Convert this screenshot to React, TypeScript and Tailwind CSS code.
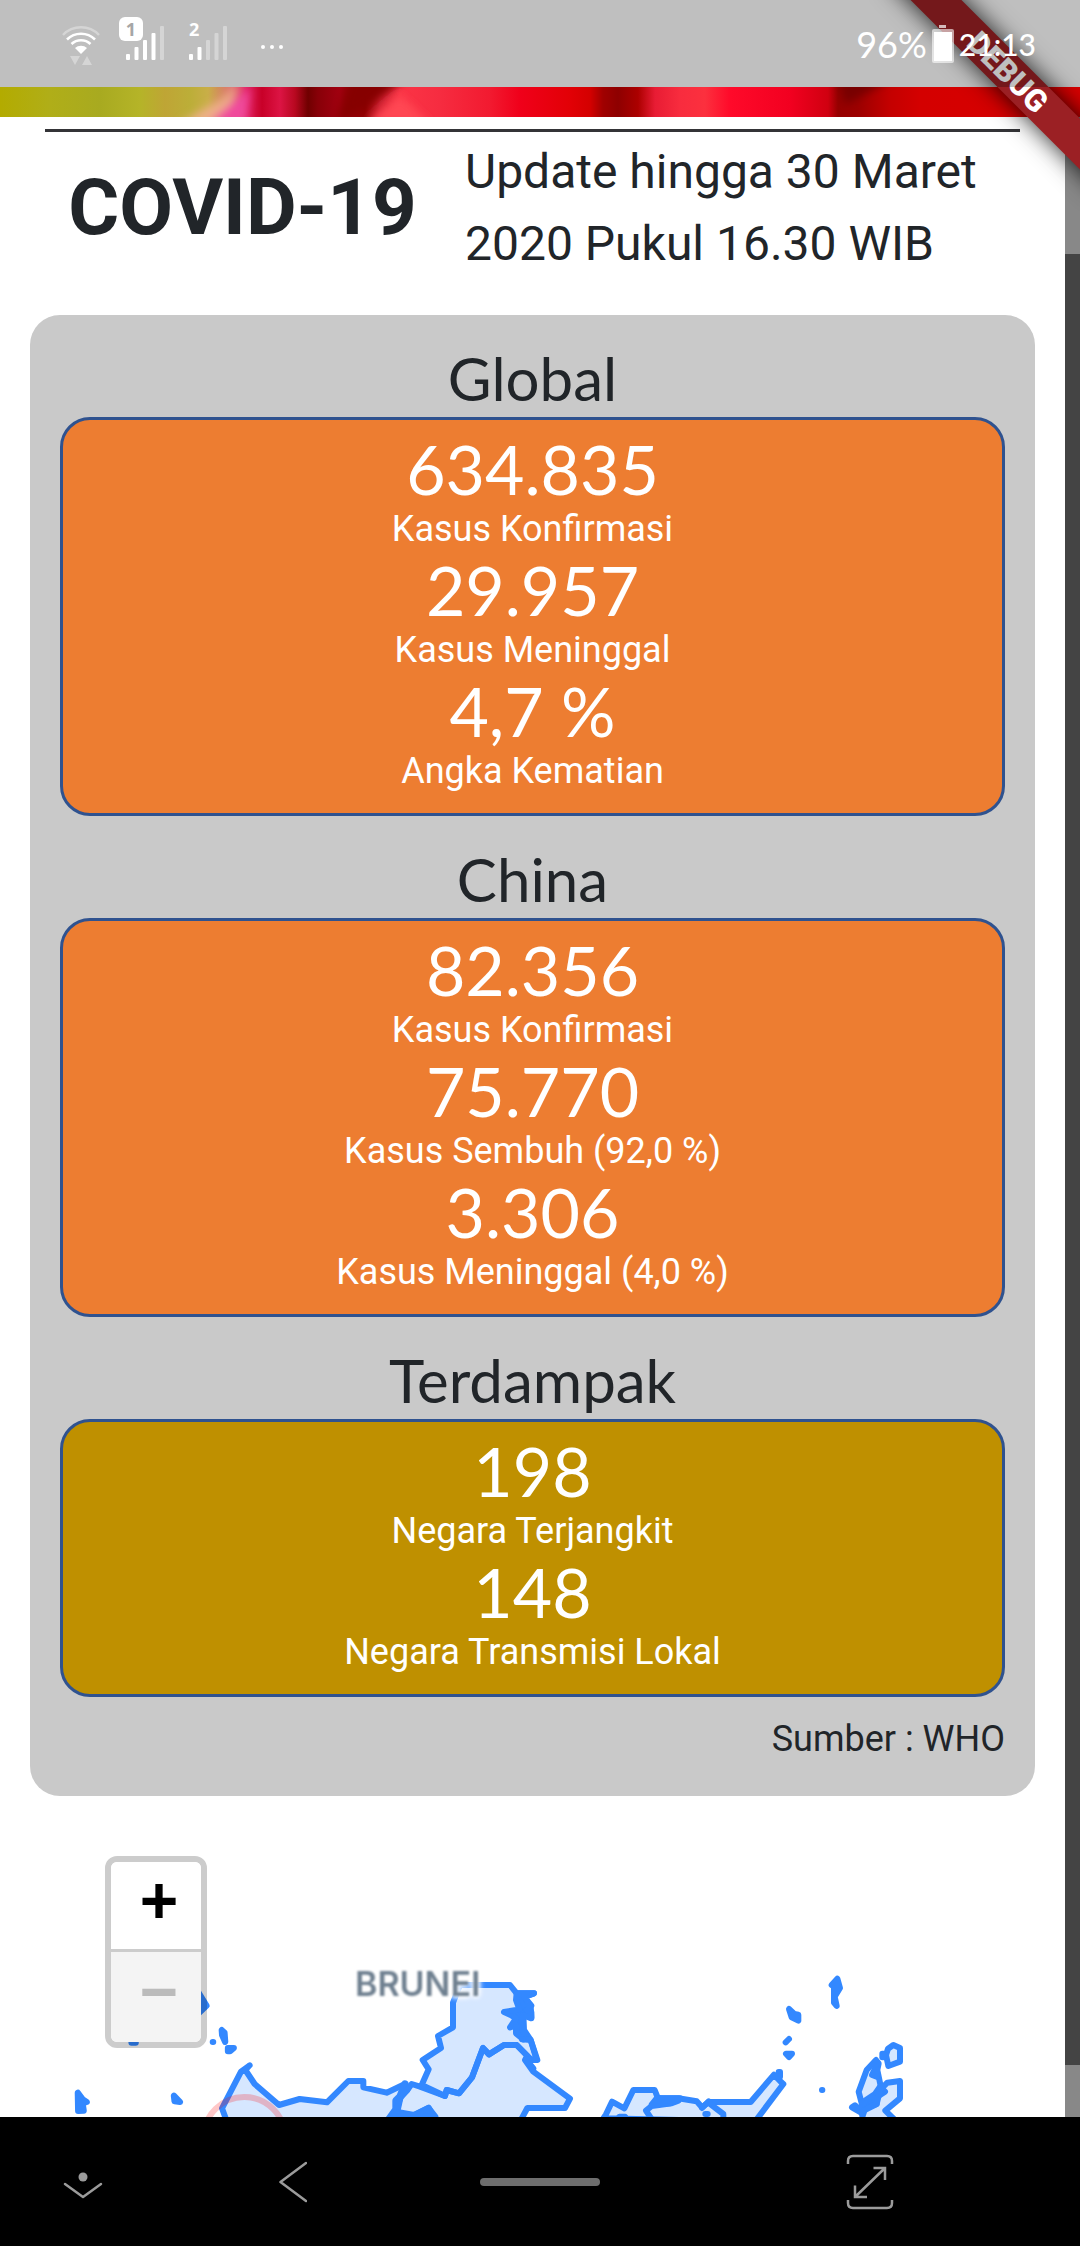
import React from "react";

type Stat = { value: string; label: string };
type Section = { title: string; tone: "orange" | "gold"; stats: Stat[] };

const sections: Section[] = [
  {
    title: "Global",
    tone: "orange",
    stats: [
      { value: "634.835", label: "Kasus Konfirmasi" },
      { value: "29.957", label: "Kasus Meninggal" },
      { value: "4,7 %", label: "Angka Kematian" },
    ],
  },
  {
    title: "China",
    tone: "orange",
    stats: [
      { value: "82.356", label: "Kasus Konfirmasi" },
      { value: "75.770", label: "Kasus Sembuh (92,0 %)" },
      { value: "3.306", label: "Kasus Meninggal (4,0 %)" },
    ],
  },
  {
    title: "Terdampak",
    tone: "gold",
    stats: [
      { value: "198", label: "Negara Terjangkit" },
      { value: "148", label: "Negara Transmisi Lokal" },
    ],
  },
];

function WifiIcon() {
  return (
    <svg viewBox="0 0 40 42" className="h-[42px] w-10" fill="none" aria-hidden="true">
      <path d="M2 11 A25 25 0 0 1 38 11" stroke="#fff" strokeOpacity="0.35" strokeWidth="2.5" />
      <path d="M6 15.500 A20 20 0 0 1 34 15.500" stroke="#fff" strokeWidth="2.600" />
      <path d="M10.500 20 A14 14 0 0 1 29.500 20" stroke="#fff" strokeWidth="2.600" />
      <path d="M14 24 A9 9 0 0 1 26 24 L20 30 Z" fill="#fff" />
      <path d="M9 32 H19 L14 41 Z M21 41 H31 L26 32 Z" fill="#fff" fillOpacity="0.35" />
    </svg>
  );
}

function SignalIcon({ level }: { level: number }) {
  return (
    <svg viewBox="0 0 38 34" className="h-[34px] w-[38px]" aria-hidden="true">
      {[6, 13, 20, 27, 34].map((h, i) => (
        <rect key={h} x={i * 8.5} y={34 - h} width="4" height={h} rx="1" fill="#fff" fillOpacity={i < level ? 1 : 0.35} />
      ))}
    </svg>
  );
}

function StatusBar() {
  return (
    <header className="relative z-20 flex h-[87px] items-start bg-black/25 pl-[61px] pr-11 text-white">
      <div className="pt-6">
        <WifiIcon />
      </div>
      <div className="relative ml-[25px] pt-[26px]">
        <SignalIcon level={4} />
        <span className="absolute -left-[7px] top-[17px] flex h-6 w-6 items-center justify-center rounded-md bg-white font-['Noto_Sans',sans-serif] text-lg font-bold leading-none text-[#a6a6a6]">
          1
        </span>
      </div>
      <div className="relative ml-[25px] pt-[26px]">
        <SignalIcon level={2} />
        <span className="absolute left-0 top-5 font-['Noto_Sans',sans-serif] text-lg font-bold leading-none">2</span>
      </div>
      <div className="ml-[34px] flex gap-[5px] pt-[45px]">
        <i className="h-1 w-1 rounded-full bg-white" />
        <i className="h-1 w-1 rounded-full bg-white" />
        <i className="h-1 w-1 rounded-full bg-white" />
      </div>
      <div className="ml-auto flex items-center pt-6 font-['Lato',sans-serif]">
        <span className="text-4xl leading-10">96%</span>
        <svg viewBox="0 0 22 38" className="mx-[5px] h-[38px] w-[22px]" aria-hidden="true">
          <rect x="7" y="0" width="7" height="3" fill="#fff" fillOpacity="0.7" />
          <rect x="0" y="4" width="22" height="34" rx="2" fill="#fff" fillOpacity="0.6" />
          <rect x="2" y="7" width="18" height="29" fill="#fff" />
        </svg>
        <span className="text-[30px] font-medium leading-10">21:13</span>
      </div>
    </header>
  );
}

function DebugRibbon() {
  return (
    <div className="pointer-events-none absolute right-0 top-0 z-10 h-60 w-60 overflow-hidden">
      <div className="absolute left-[18px] top-[54px] flex h-9 w-[300px] rotate-45 items-center justify-center bg-[#9b2024] font-['Roboto',sans-serif] text-[31px] font-black leading-none text-white shadow-[0_0_24px_rgba(0,0,0,0.85)]">
        DEBUG
      </div>
    </div>
  );
}

function PhotoStrip() {
  const stops: [number, string][] = [
    [0, "#b3ab00"], [50, "#b0ae18"], [100, "#a8aa20"], [140, "#b5b428"], [165, "#bfa535"], [190, "#bcae38"],
    [208, "#c9ae48"], [232, "#dc6a70"], [246, "#e02060"], [262, "#c80028"], [280, "#dc1444"], [295, "#b80820"],
    [308, "#700000"], [318, "#880008"], [340, "#a20010"], [365, "#900000"], [380, "#d02030"], [400, "#fb3446"],
    [440, "#f62c40"], [490, "#f21a30"], [520, "#f0001a"], [570, "#e20006"], [590, "#d40000"], [603, "#a00000"],
    [618, "#8e0000"], [638, "#ac0000"], [655, "#e81c34"], [680, "#f82c3e"], [705, "#fc303e"], [730, "#ff0a2a"],
    [790, "#f20020"], [828, "#d00010"], [838, "#960000"], [858, "#9c0000"], [890, "#c40000"], [920, "#d40000"],
    [1080, "#d80000"],
  ];
  return (
    <svg viewBox="0 0 1080 30" preserveAspectRatio="none" className="block h-[30px] w-full" aria-hidden="true">
      <defs>
        <linearGradient id="petals" gradientUnits="userSpaceOnUse" x1="0" y1="0" x2="1080" y2="0">
          {stops.map(([x, c]) => (
            <stop key={x} offset={x / 1080} stopColor={c} />
          ))}
        </linearGradient>
        <filter id="soft" filterUnits="userSpaceOnUse" x="0" y="-30" width="1080" height="90">
          <feGaussianBlur stdDeviation="4" />
        </filter>
      </defs>
      <rect width="1080" height="30" fill="url(#petals)" />
      <g filter="url(#soft)">
        <path d="M350 -10 H408 L362 24 L345 34 H336 Z" fill="#860000" />
        <path d="M400 8 L366 36 H430 Z" fill="#ff4652" />
        <path d="M180 36 L222 12 L240 -6 L222 36 Z" fill="#eeb088" />
        <path d="M208 36 L250 0 L246 36 Z" fill="#f04a9c" />
        <path d="M838 -8 H892 L845 18 Z" fill="#780000" />
      </g>
    </svg>
  );
}

function StatBox({ section }: { section: Section }) {
  const tone = section.tone === "orange" ? "bg-[#ed7d31]" : "bg-[#bf9000]";
  return (
    <section className="pt-[27px] text-center">
      <h2 className="pb-[3px] font-['Lato',sans-serif] text-[60px] leading-[72px] text-[#212529]">{section.title}</h2>
      <dl className={"rounded-[30px] border-3 border-[#2f528f] py-[15px] text-white " + tone}>
        {section.stats.map((s) => (
          <div key={s.label} className="flex flex-col-reverse">
            <dt className="font-['Roboto',sans-serif] text-4xl leading-[54px]">{s.label}</dt>
            <dd className="font-['Lato',sans-serif] text-[68px] leading-[67px]">{s.value}</dd>
          </div>
        ))}
      </dl>
    </section>
  );
}

function MapPanel() {
  return (
    <div className="relative">
      <svg viewBox="0 0 3195 963" className="block w-full overflow-hidden" role="img" aria-label="Peta">
        <g fill="#3388ff" fillOpacity="0.2" stroke="#3388ff" strokeWidth="18" strokeLinejoin="round" strokeLinecap="round">
          <g transform="scale(1.033 1) translate(0 -48)">
            <path fillOpacity="1" d="M572 630 L600 677 L572 705 Z" />
            <path fillOpacity="1" d="M382 785 H394 V788 H382 Z" />
            <path fillOpacity="1" d="M226 938 L227 993 L243 992 L240 970 L252 966 L240 958 Z" />
            <path fillOpacity="1" d="M505 947 L507 964 L523 966 Z" />
            <path fillOpacity="1" d="M644 750 L645 765 L654 786 L652 758 Z" />
            <path fillOpacity="1" d="M662 804 H679 L668 814 H662 Z" />
            <path d="M618 786 H619" />
          </g>
          <g transform="translate(960 552)">
            <path d="M-270 450 L-294 385 L-237 275 L-211 256 L-224 270 L-196 312 L-123 375 L-61 357 L21 367 L85 303 H130 V322 L200 338 L255 312 L262 330 L240 350 L230 395 L200 430 Z" />
            <path fill="none" d="M255 312 L240 350 L228 362 V388 L205 420 M240 350 L230 395" strokeWidth="22" />
            <path d="M262 330 L275 312 L300 320 L375 348 L380 330 L417 340 L456 292 L489 204 L507 223 L552 195 H590 L622 228 L615 240 L640 275 L750 356 L735 384 H622 L600 425 H350 L326 383 L282 405 L228 395 L240 355 Z" />
            <path d="M305 315 L326 268 L308 240 L363 204 L354 168 L399 142 V68 L420 15 H570 L590 40 H642 L610 52 L632 77 L634 112 L610 100 L612 150 L632 180 L650 240 H635 L590 195 H552 L507 223 L489 204 L456 292 L417 340 L380 330 L375 348 Z" />
            <path fillOpacity="1" d="M590 40 H642 L612 50 L634 77 L620 90 L634 96 V115 L608 105 V148 L618 165 L610 178 L588 160 V135 L570 142 L588 115 L572 105 L552 96 L598 88 L588 60 Z" />
            <path fill="none" d="M606 178 L632 180 L652 240 L618 238 L640 265" />
            <path fillOpacity="1" d="M228 397 L280 407 L326 384 L346 410 L330 408 L260 425 H210 Z" />
          </g>
          <g transform="translate(1740 552)">
            <path d="M70 415 L78 403 L96 365 L133 385 L160 330 H224 L234 355 H295 L350 364 L366 382 L386 366 H512 L582 284 L600 303 L610 312 L525 425 Z" />
            <path fill="none" d="M220 425 L198 392 L215 378 L275 370 L295 362 M388 370 L430 402 V425 M386 364 L366 384 M240 356 L222 372" />
            <path fillOpacity="1" d="M230 355 H300 L270 370 L215 374 Z M376 402 H383 M110 425 L118 410 H135 L145 425 Z" />
            <path fillOpacity="1" d="M596 276 H600 V290 H596 Z" />
            <path fillOpacity="1" d="M755 15 L772 -4 L780 24 L764 50 L770 78 L762 68 V20 Z" />
            <path fillOpacity="1" d="M627 87 L635 112 L655 122 V104 L643 102 Z" />
            <path d="M617 187 L627 177 M726 330 H727" />
            <path fillOpacity="1" d="M618 221 H636 L627 231 Z" />
            <path d="M924 206 L940 195 L960 204 V245 L925 258 L918 225 Z" />
            <path fillOpacity="1" d="M907 221 H910 V232 H907 Z" />
            <path d="M888 240 L860 270 L836 335 L845 370 L890 350 L902 318 L892 270 L896 250 Z" />
            <path fillOpacity="1" d="M876 285 L888 260 L890 290 Z M900 320 L915 335 L885 355 L890 372 L855 385 L850 402 L816 382 L825 376 L842 390 L850 365 L885 342 Z" />
            <path d="M900 330 L922 308 L960 303 V355 L916 392 L950 425 H850 L845 395 L890 372 Z" />
          </g>
        </g>
        <circle cx="733" cy="1025" r="122" fill="none" stroke="#ff0000" strokeOpacity="0.22" strokeWidth="18" />
      </svg>
      <span className="absolute left-[355px] top-[172px] font-['Inter',sans-serif] text-[34px] font-semibold leading-8 text-[#6f8090] blur-[1px] [text-shadow:0_0_4px_#fff,0_0_4px_#fff,0_0_6px_#fff,0_0_6px_#fff]">
        BRUNEI
      </span>
      <div className="absolute left-[105px] top-[60px] flex w-[102px] flex-col overflow-hidden rounded-xl border-6 border-black/20 bg-clip-padding font-['Liberation_Mono',monospace] text-[66px] font-bold">
        <button type="button" aria-label="Perbesar" className="h-[90px] border-b-3 border-[#ccc] bg-white pl-[6px] leading-[88px] text-black">
          +
        </button>
        <button type="button" aria-label="Perkecil" disabled className="h-[90px] bg-[#f4f4f4] pl-[6px] leading-[88px] text-[#bbb]">
          −
        </button>
      </div>
    </div>
  );
}

function NavBar() {
  return (
    <nav className="grid h-[129px] grid-cols-[166fr_254fr_240fr_420fr] place-items-center bg-black text-[#9b9b9b]">
      <button type="button" aria-label="Sembunyikan bilah">
        <svg viewBox="0 0 40 40" className="h-10 w-10" fill="none" stroke="currentColor" strokeWidth="2.500" strokeLinecap="round" strokeLinejoin="round">
          <circle cx="20" cy="15" r="4.500" fill="currentColor" stroke="none" />
          <path d="M2 22 L20 35 L38 22" />
        </svg>
      </button>
      <button type="button" aria-label="Kembali">
        <svg viewBox="0 0 28 42" className="h-[42px] w-7" fill="none" stroke="currentColor" strokeWidth="2.500" strokeLinecap="round" strokeLinejoin="round">
          <path d="M27 2 L1.500 21 L27 40" />
        </svg>
      </button>
      <button type="button" aria-label="Beranda" className="h-2 w-[120px] rounded-full bg-[#6e6e6e]" />
      <button type="button" aria-label="Layar penuh">
        <svg viewBox="0 0 48 56" className="h-14 w-12" fill="none" stroke="currentColor" strokeWidth="2.500">
          <path d="M2 10 V7 Q2 2 7 2 H41 Q46 2 46 7 V10 M2 46 V49 Q2 54 7 54 H41 Q46 54 46 49 V46" />
          <path d="M27.500 14 H39 V26 M39 14 L9 43 M9 31.500 V43 H21" />
        </svg>
      </button>
    </nav>
  );
}

export default function App() {
  return (
    <div className="relative flex min-h-screen flex-col overflow-hidden bg-white">
      <DebugRibbon />
      <StatusBar />
      <PhotoStrip />
      <div className="flex grow">
        <main className="min-w-0 flex-1">
          <div className="px-[45px] pt-3">
            <div className="grid grid-cols-[79fr_116fr] items-center border-t-3 border-[#343437] pt-1 font-['Roboto',sans-serif] text-[#212529]">
              <h1 className="text-center text-[78px] font-bold leading-[90px]">COVID-19</h1>
              <p className="pl-[25px] text-5xl leading-[72px]">Update hingga 30 Maret 2020 Pukul 16.30 WIB</p>
            </div>
          </div>
          <div className="mx-[30px] mt-[35px] rounded-[30px] bg-[#c9c9c9] px-[30px] pb-[30px]">
            {sections.map((s) => (
              <StatBox key={s.title} section={s} />
            ))}
            <p className="pt-[15px] text-right font-['Roboto',sans-serif] text-4xl leading-[54px] text-[#212529]">Sumber : WHO</p>
          </div>
          <MapPanel />
        </main>
        <div className="flex w-[15px] flex-col bg-[#888]" aria-hidden="true">
          <div className="grow-[137]" />
          <div className="grow-[1811] bg-[#444]" />
          <div className="grow-[52]" />
        </div>
      </div>
      <NavBar />
    </div>
  );
}
